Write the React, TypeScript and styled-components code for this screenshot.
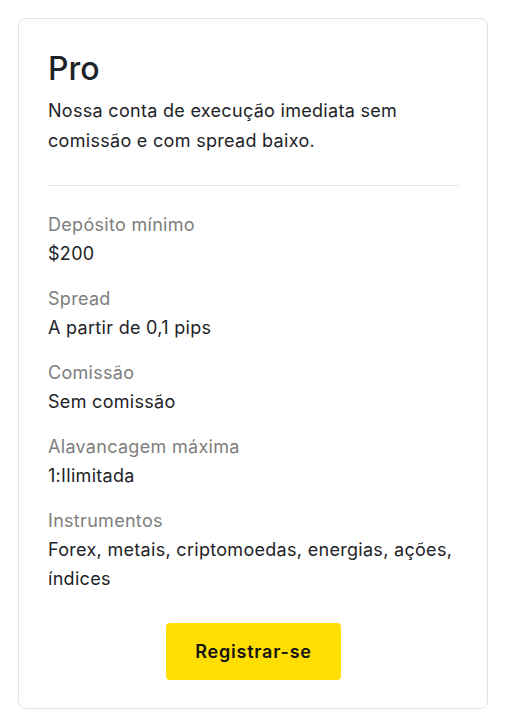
import styled, { createGlobalStyle } from "styled-components";

const GlobalStyle = createGlobalStyle`
  body {
    margin: 0;
    background: #ffffff;
    font-family: Inter, "Noto Sans", sans-serif;
    color: #1e2327;
  }
`;

const Page = styled.div`
  padding: 18px 21px 16px 18px;
`;

const Card = styled.section`
  width: 470px;
  box-sizing: border-box;
  border: 1px solid #e3e3e3;
  border-radius: 8px;
  padding: 30px 28px 28px 29px;
  display: flex;
  flex-direction: column;
`;

const Title = styled.h2`
  margin: 0;
  font-size: 32px;
  line-height: 40px;
  font-weight: 500;
  color: #1e2327;
`;

const Description = styled.p`
  margin: 7px 0 0;
  font-size: 18px;
  line-height: 30px;
  font-weight: 400;
  letter-spacing: 0.3px;
`;

const Divider = styled.hr`
  margin: 29px 0 24px;
  border: none;
  border-top: 1px solid #e6e6e6;
  width: 411px;
`;

const Specs = styled.dl`
  margin: 0;
  display: flex;
  flex-direction: column;
  gap: 16px;
`;

const Spec = styled.div`
  display: flex;
  flex-direction: column;
`;

const Label = styled.dt`
  font-size: 18px;
  line-height: 29px;
  letter-spacing: 0.3px;
  color: #7e7e7e;
`;

const Value = styled.dd`
  margin: 0;
  font-size: 18px;
  line-height: 29px;
  letter-spacing: 0.3px;
  color: #1e2327;
`;

const Button = styled.button`
  align-self: center;
  margin-top: 30px;
  width: 175px;
  height: 57px;
  border: none;
  border-radius: 4px;
  background: #ffde02;
  color: #141414;
  font-family: Inter, "Noto Sans", sans-serif;
  font-size: 18px;
  font-weight: 600;
  letter-spacing: 0.8px;
  cursor: pointer;
`;

const specs = [
  { label: "Depósito mínimo", value: "$200" },
  { label: "Spread", value: "A partir de 0,1 pips" },
  { label: "Comissão", value: "Sem comissão" },
  { label: "Alavancagem máxima", value: "1:Ilimitada" },
  { label: "Instrumentos", value: "Forex, metais, criptomoedas, energias, ações, índices" },
];

export default function App() {
  return (
    <Page>
      <GlobalStyle />
      <Card>
        <Title>Pro</Title>
        <Description>
          Nossa conta de execução imediata sem comissão e com spread baixo.
        </Description>
        <Divider />
        <Specs>
          {specs.map((s) => (
            <Spec key={s.label}>
              <Label>{s.label}</Label>
              <Value>{s.value}</Value>
            </Spec>
          ))}
        </Specs>
        <Button>Registrar-se</Button>
      </Card>
    </Page>
  );
}
